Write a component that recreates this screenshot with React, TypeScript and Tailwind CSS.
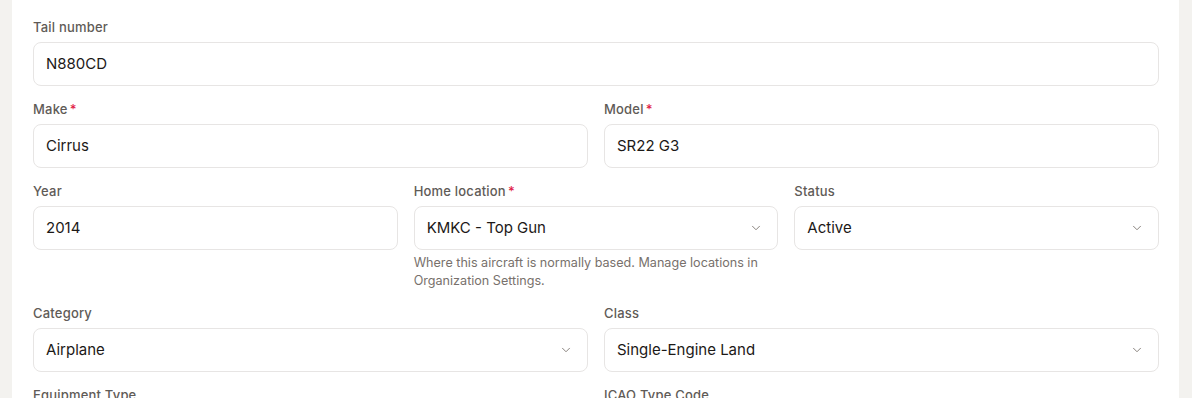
import { ChevronDown } from 'lucide-react';

const font = { fontFamily: 'Inter, "Noto Sans", sans-serif' };

const Label = ({ text, required }: { text: string; required?: boolean }) => (
  <label className="block h-4 leading-4 text-[13px] font-medium tracking-[0.015em] text-[#5f5b57] mb-[7px]">
    {text}
    {required && <span className="text-[#e11d48] ml-[2px]">*</span>}
  </label>
);

const TextField = ({ label, value, required }: { label: string; value: string; required?: boolean }) => (
  <div>
    <Label text={label} required={required} />
    <div className="h-[44px] px-3 flex items-center border border-[#e7e5e4] rounded-lg bg-white text-[15px] text-[#1c1917]">
      {value}
    </div>
  </div>
);

const SelectField = ({ label, value, required, help }: { label: string; value: string; required?: boolean; help?: string }) => (
  <div>
    <Label text={label} required={required} />
    <div className="h-[44px] pl-3 pr-[14px] flex items-center justify-between border border-[#e7e5e4] rounded-lg bg-white text-[15px] text-[#1c1917]">
      <span>{value}</span>
      <ChevronDown size={14} strokeWidth={1.5} className="text-[#78716c]" />
    </div>
    {help && <p className="mt-1 text-[12.6px] leading-[18px] text-[#78716c]">{help}</p>}
  </div>
);

export default function App() {
  return (
    <div className="h-[398px] bg-[#f3f2ef] overflow-hidden" style={font}>
      <div className="ml-[12px] w-[1167px] h-full bg-white pl-[21px] pr-[20px] pt-[19px] flex flex-col gap-[15px]">
        <TextField label="Tail number" value="N880CD" />
        <div className="grid grid-cols-2 gap-4">
          <TextField label="Make" value="Cirrus" required />
          <TextField label="Model" value="SR22 G3" required />
        </div>
        <div className="grid grid-cols-3 gap-4">
          <TextField label="Year" value="2014" />
          <SelectField
            label="Home location"
            value="KMKC - Top Gun"
            required
            help="Where this aircraft is normally based. Manage locations in Organization Settings."
          />
          <SelectField label="Status" value="Active" />
        </div>
        <div className="grid grid-cols-2 gap-4">
          <SelectField label="Category" value="Airplane" />
          <SelectField label="Class" value="Single-Engine Land" />
        </div>
        <div className="grid grid-cols-2 gap-4">
          <TextField label="Equipment Type" value="" />
          <TextField label="ICAO Type Code" value="" />
        </div>
      </div>
    </div>
  );
}
